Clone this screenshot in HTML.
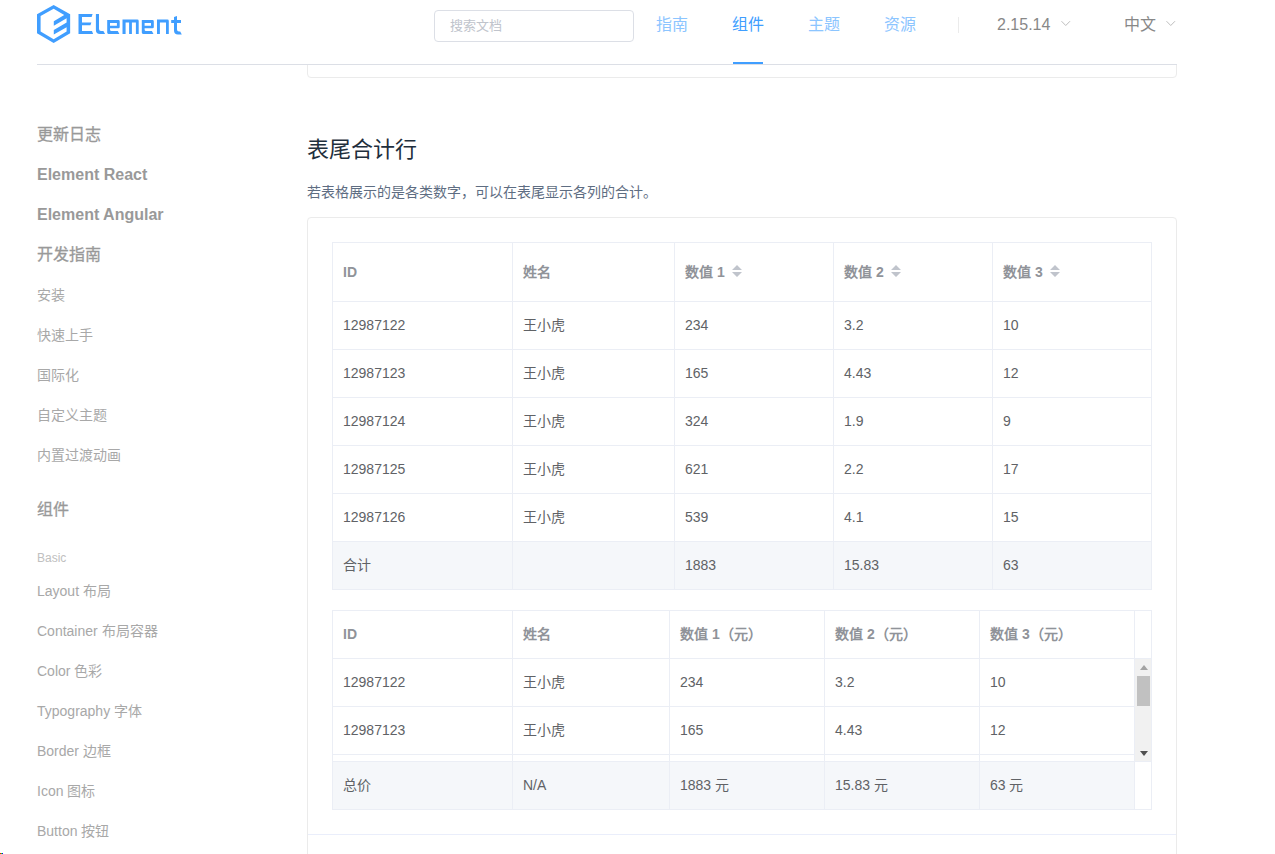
<!DOCTYPE html><html lang="zh-CN"><head><meta charset="utf-8"><title>Element</title><style>
*{margin:0;padding:0;box-sizing:border-box}
html,body{width:1275px;height:854px;overflow:hidden;background:#fff}
body{position:relative;font-family:"Liberation Sans",sans-serif;color:#606266}
.ab{position:absolute}
.t{position:absolute;white-space:nowrap;line-height:20px;height:20px}
.hl{position:absolute;height:1px;background:#ebeef5}
.vl{position:absolute;width:1px;background:#ebeef5}
.side{color:#999;font-size:16px;font-weight:bold}
.sub{color:#a8a8a8;font-size:14px}
.th{color:#909399;font-weight:bold;font-size:14px}
.td{color:#606266;font-size:14px}
</style></head><body>
<div class="ab" style="left:307px;top:-20px;width:870px;height:98px;border:1px solid #ebebeb;border-radius:4px"></div>
<div class="ab" style="left:0;top:0;width:1275px;height:64px;background:#fff"></div>
<div class="ab" style="left:37px;top:64px;width:1140px;height:1px;background:#dcdfe6"></div>
<svg class="ab" style="left:0;top:0" width="200" height="50" viewBox="0 0 200 50">
<path fill="#409EFF" fill-rule="evenodd" d="M53.65,5 L70.15,14.3 L70.15,33.2 L53.65,43 L37,33.2 L37,14.3 Z M53.65,8.8 L64.2,15.05 L53.8,21.3 L53.8,25.7 L66.6,18.2 L66.6,22.6 L53.8,30.1 L53.8,34.5 L66.6,27.3 L66.6,31.6 L53.65,39.2 L40.6,31.4 L40.6,16.1 Z"/>
<g fill="#409EFF">
<path d="M78.5,13.9 H92.6 L91.6,16.9 H82 V22.4 H91.4 L90.4,25.2 H82 V31 H92 L93.1,33.9 H78.5 Z"/>
<path d="M95.9,13.9 H99 V29 Q99,31 101,31 H103.4 L105.1,33.9 H100 Q95.9,33.9 95.9,30 Z"/>
<path d="M107.2,20.1 H118.5 Q119.7,20.1 119.7,21.5 V27 Q119.7,28.3 118.5,28.3 H110 V29.5 Q110,31 111.5,31 H117.8 L119.4,33.9 H108.5 Q107.2,33.9 107.2,32.5 Z M110,22.9 V25.7 H116.9 V22.9 Z"/>
<path d="M122.5,19.6 H137.3 Q138.7,19.6 138.7,21 V33.9 H135.9 V22.5 H131.9 V33.9 H129.1 V22.5 H125.6 V33.9 H122.5 Z"/>
<path d="M141.8,20.1 H152.6 Q153.8,20.1 153.8,21.5 V27 Q153.8,28.3 152.6,28.3 H144.6 V29.5 Q144.6,31 146,31 H151.9 L153.5,33.9 H143.1 Q141.8,33.9 141.8,32.5 Z M144.6,22.9 V25.7 H151 V22.9 Z"/>
<path d="M157,19.6 H167.4 Q168.8,19.6 168.8,21 V33.9 H166 V22.5 H159.9 V33.9 H157 Z"/>
<path d="M174,16.9 L177,16.1 V20 H181 V22.9 H177 V29.5 Q177,31.5 179,31.5 H180.2 L181.8,34.4 H178 Q174,34.4 174,30.5 V22.9 H171.2 V20 H174 Z"/>
</g></svg>
<div class="ab" style="left:434px;top:10px;width:200px;height:32px;border:1px solid #dcdfe6;border-radius:4px"></div>
<div class="t" style="left:450px;top:16px;font-size:13px;color:#c0c4cc">搜索文档</div>
<div class="t" style="left:656px;top:15px;font-size:16px;color:#8cc5ff">指南</div>
<div class="t" style="left:732px;top:15px;font-size:16px;color:#409eff">组件</div>
<div class="t" style="left:808px;top:15px;font-size:16px;color:#8cc5ff">主题</div>
<div class="t" style="left:884px;top:15px;font-size:16px;color:#8cc5ff">资源</div>
<div class="ab" style="left:733px;top:62px;width:30px;height:2px;background:#409eff"></div>
<div class="ab" style="left:958px;top:17px;width:1px;height:16px;background:#ebebeb"></div>
<div class="t" style="left:997px;top:15px;font-size:16px;color:#888">2.15.14</div>
<div class="t" style="left:1124px;top:15px;font-size:16px;color:#888">中文</div>
<svg class="ab" style="left:1061px;top:20px" width="11" height="8" viewBox="0 0 11 8"><path d="M0.5,1.2 L4.75,5.5 L9,1.2" fill="none" stroke="#bdbdbd" stroke-width="1"/></svg>
<svg class="ab" style="left:1166px;top:20px" width="11" height="8" viewBox="0 0 11 8"><path d="M0.5,1.2 L4.75,5.5 L9,1.2" fill="none" stroke="#bdbdbd" stroke-width="1"/></svg>
<div class="t side" style="left:37px;top:125px;font-weight:normal;-webkit-text-stroke:0.3px #999">更新日志</div>
<div class="t side" style="left:37px;top:165px">Element React</div>
<div class="t side" style="left:37px;top:205px">Element Angular</div>
<div class="t side" style="left:37px;top:245px;font-weight:normal;-webkit-text-stroke:0.3px #999">开发指南</div>
<div class="t sub" style="left:37px;top:285px">安装</div>
<div class="t sub" style="left:37px;top:325px">快速上手</div>
<div class="t sub" style="left:37px;top:365px">国际化</div>
<div class="t sub" style="left:37px;top:405px">自定义主题</div>
<div class="t sub" style="left:37px;top:445px">内置过渡动画</div>
<div class="t side" style="left:37px;top:500px;font-weight:normal;-webkit-text-stroke:0.3px #999">组件</div>
<div class="t sub" style="left:37px;top:581px">Layout 布局</div>
<div class="t sub" style="left:37px;top:621px">Container 布局容器</div>
<div class="t sub" style="left:37px;top:661px">Color 色彩</div>
<div class="t sub" style="left:37px;top:701px">Typography 字体</div>
<div class="t sub" style="left:37px;top:741px">Border 边框</div>
<div class="t sub" style="left:37px;top:781px">Icon 图标</div>
<div class="t sub" style="left:37px;top:821px">Button 按钮</div>
<div class="t" style="left:37px;top:548px;font-size:12px;color:#c0c0c0">Basic</div>
<div class="t" style="left:307px;top:138px;font-size:22px;color:#1f2f3d;height:24px;line-height:24px">表尾合计行</div>
<div class="t" style="left:307px;top:182px;font-size:14px;color:#5e6d82">若表格展示的是各类数字，可以在表尾显示各列的合计。</div>
<div class="ab" style="left:307px;top:217px;width:870px;height:700px;border:1px solid #ebebeb;border-radius:4px"></div>
<div class="ab" style="left:308px;top:834px;width:868px;height:1px;background:#eaeefb"></div>
<div class="ab" style="left:333px;top:542px;width:818px;height:47px;background:#f5f7fa"></div>
<div class="hl" style="left:332px;top:242px;width:820px"></div>
<div class="hl" style="left:332px;top:301px;width:820px"></div>
<div class="hl" style="left:332px;top:349px;width:820px"></div>
<div class="hl" style="left:332px;top:397px;width:820px"></div>
<div class="hl" style="left:332px;top:445px;width:820px"></div>
<div class="hl" style="left:332px;top:493px;width:820px"></div>
<div class="hl" style="left:332px;top:541px;width:820px"></div>
<div class="hl" style="left:332px;top:589px;width:820px"></div>
<div class="vl" style="left:332px;top:242px;height:348px"></div>
<div class="vl" style="left:512px;top:242px;height:348px"></div>
<div class="vl" style="left:674px;top:242px;height:348px"></div>
<div class="vl" style="left:833px;top:242px;height:348px"></div>
<div class="vl" style="left:992px;top:242px;height:348px"></div>
<div class="vl" style="left:1151px;top:242px;height:348px"></div>
<div class="t th" style="left:343px;top:262px">ID</div>
<div class="t th" style="left:523px;top:262px">姓名</div>
<div class="t th" style="left:685px;top:262px">数值 1</div>
<div class="t th" style="left:844px;top:262px">数值 2</div>
<div class="t th" style="left:1003px;top:262px">数值 3</div>
<svg class="ab" style="left:732px;top:265px" width="10" height="12" viewBox="0 0 10 12"><path d="M5,0 L10,5 H0 Z M0,7 H10 L5,12 Z" fill="#c0c4cc"/></svg>
<svg class="ab" style="left:891px;top:265px" width="10" height="12" viewBox="0 0 10 12"><path d="M5,0 L10,5 H0 Z M0,7 H10 L5,12 Z" fill="#c0c4cc"/></svg>
<svg class="ab" style="left:1050px;top:265px" width="10" height="12" viewBox="0 0 10 12"><path d="M5,0 L10,5 H0 Z M0,7 H10 L5,12 Z" fill="#c0c4cc"/></svg>
<div class="t td" style="left:343px;top:315px">12987122</div>
<div class="t td" style="left:523px;top:315px">王小虎</div>
<div class="t td" style="left:685px;top:315px">234</div>
<div class="t td" style="left:844px;top:315px">3.2</div>
<div class="t td" style="left:1003px;top:315px">10</div>
<div class="t td" style="left:343px;top:363px">12987123</div>
<div class="t td" style="left:523px;top:363px">王小虎</div>
<div class="t td" style="left:685px;top:363px">165</div>
<div class="t td" style="left:844px;top:363px">4.43</div>
<div class="t td" style="left:1003px;top:363px">12</div>
<div class="t td" style="left:343px;top:411px">12987124</div>
<div class="t td" style="left:523px;top:411px">王小虎</div>
<div class="t td" style="left:685px;top:411px">324</div>
<div class="t td" style="left:844px;top:411px">1.9</div>
<div class="t td" style="left:1003px;top:411px">9</div>
<div class="t td" style="left:343px;top:459px">12987125</div>
<div class="t td" style="left:523px;top:459px">王小虎</div>
<div class="t td" style="left:685px;top:459px">621</div>
<div class="t td" style="left:844px;top:459px">2.2</div>
<div class="t td" style="left:1003px;top:459px">17</div>
<div class="t td" style="left:343px;top:507px">12987126</div>
<div class="t td" style="left:523px;top:507px">王小虎</div>
<div class="t td" style="left:685px;top:507px">539</div>
<div class="t td" style="left:844px;top:507px">4.1</div>
<div class="t td" style="left:1003px;top:507px">15</div>
<div class="t td" style="left:343px;top:555px">合计</div>
<div class="t td" style="left:685px;top:555px">1883</div>
<div class="t td" style="left:844px;top:555px">15.83</div>
<div class="t td" style="left:1003px;top:555px">63</div>
<div class="ab" style="left:333px;top:762px;width:801px;height:47px;background:#f5f7fa"></div>
<div class="hl" style="left:332px;top:610px;width:820px"></div>
<div class="hl" style="left:332px;top:658px;width:820px"></div>
<div class="hl" style="left:332px;top:706px;width:820px"></div>
<div class="hl" style="left:332px;top:754px;width:820px"></div>
<div class="hl" style="left:332px;top:761px;width:820px"></div>
<div class="hl" style="left:332px;top:809px;width:820px"></div>
<div class="vl" style="left:332px;top:610px;height:200px"></div>
<div class="vl" style="left:512px;top:610px;height:200px"></div>
<div class="vl" style="left:669px;top:610px;height:200px"></div>
<div class="vl" style="left:824px;top:610px;height:200px"></div>
<div class="vl" style="left:979px;top:610px;height:200px"></div>
<div class="vl" style="left:1134px;top:610px;height:200px"></div>
<div class="vl" style="left:1151px;top:610px;height:200px"></div>
<div class="ab" style="left:1135px;top:659px;width:16px;height:102px;background:#f1f1f1"></div>
<div class="ab" style="left:1137px;top:676px;width:13px;height:30px;background:#c1c1c1"></div>
<svg class="ab" style="left:1140px;top:665px" width="8" height="5" viewBox="0 0 8 5"><path d="M4,0 L8,5 H0 Z" fill="#a3a3a3"/></svg>
<svg class="ab" style="left:1140px;top:751px" width="8" height="5" viewBox="0 0 8 5"><path d="M0,0 H8 L4,5 Z" fill="#505050"/></svg>
<div class="t th" style="left:343px;top:624px">ID</div>
<div class="t th" style="left:523px;top:624px">姓名</div>
<div class="t th" style="left:680px;top:624px">数值 1（元）</div>
<div class="t th" style="left:835px;top:624px">数值 2（元）</div>
<div class="t th" style="left:990px;top:624px">数值 3（元）</div>
<div class="t td" style="left:343px;top:672px">12987122</div>
<div class="t td" style="left:523px;top:672px">王小虎</div>
<div class="t td" style="left:680px;top:672px">234</div>
<div class="t td" style="left:835px;top:672px">3.2</div>
<div class="t td" style="left:990px;top:672px">10</div>
<div class="t td" style="left:343px;top:720px">12987123</div>
<div class="t td" style="left:523px;top:720px">王小虎</div>
<div class="t td" style="left:680px;top:720px">165</div>
<div class="t td" style="left:835px;top:720px">4.43</div>
<div class="t td" style="left:990px;top:720px">12</div>
<div class="t td" style="left:343px;top:775px">总价</div>
<div class="t td" style="left:523px;top:775px">N/A</div>
<div class="t td" style="left:680px;top:775px">1883 元</div>
<div class="t td" style="left:835px;top:775px">15.83 元</div>
<div class="t td" style="left:990px;top:775px">63 元</div>
<div class="ab" style="left:0;top:853px;width:1px;height:1px;background:#f00"></div>
<div class="ab" style="left:1px;top:853px;width:1px;height:1px;background:#0f0"></div>
<div class="ab" style="left:2px;top:853px;width:1px;height:1px;background:#00f"></div>
</body></html>
